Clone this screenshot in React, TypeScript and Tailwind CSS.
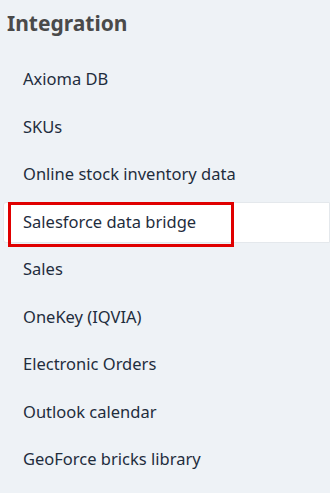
import React from 'react';

const items = [
  'Axioma DB',
  'SKUs',
  'Online stock inventory data',
  'Salesforce data bridge',
  'Sales',
  'OneKey (IQVIA)',
  'Electronic Orders',
  'Outlook calendar',
  'GeoForce bricks library',
];

export default function App() {
  const active = 'Salesforce data bridge';
  return (
    <div
      className="w-[330px] h-[493px] overflow-hidden bg-[#eef2f6]"
      style={{ fontFamily: '"Noto Sans", "Open Sans", sans-serif' }}
    >
      <h2 className="pl-[7px] pt-[7px] text-[21px] leading-[32px] font-bold text-[#4a4a4a]">
        Integration
      </h2>
      <ul className="mt-[20px] flex flex-col gap-[6.5px]">
        {items.map((item) => (
          <li
            key={item}
            className={
              item === active
                ? 'relative ml-[3px] h-[41px] flex items-center pl-[19px] bg-white border border-[#e4e8ec] rounded-l-[3px] text-[16.5px] text-[#1f2d3d]'
                : 'h-[41px] flex items-center pl-[23px] text-[16.5px] text-[#1f2d3d]'
            }
          >
            {item}
            {item === active && (
              <span className="absolute left-[4px] top-[-1px] w-[226px] h-[45px] border-[3px] border-[#e00000]" />
            )}
          </li>
        ))}
      </ul>
    </div>
  );
}
